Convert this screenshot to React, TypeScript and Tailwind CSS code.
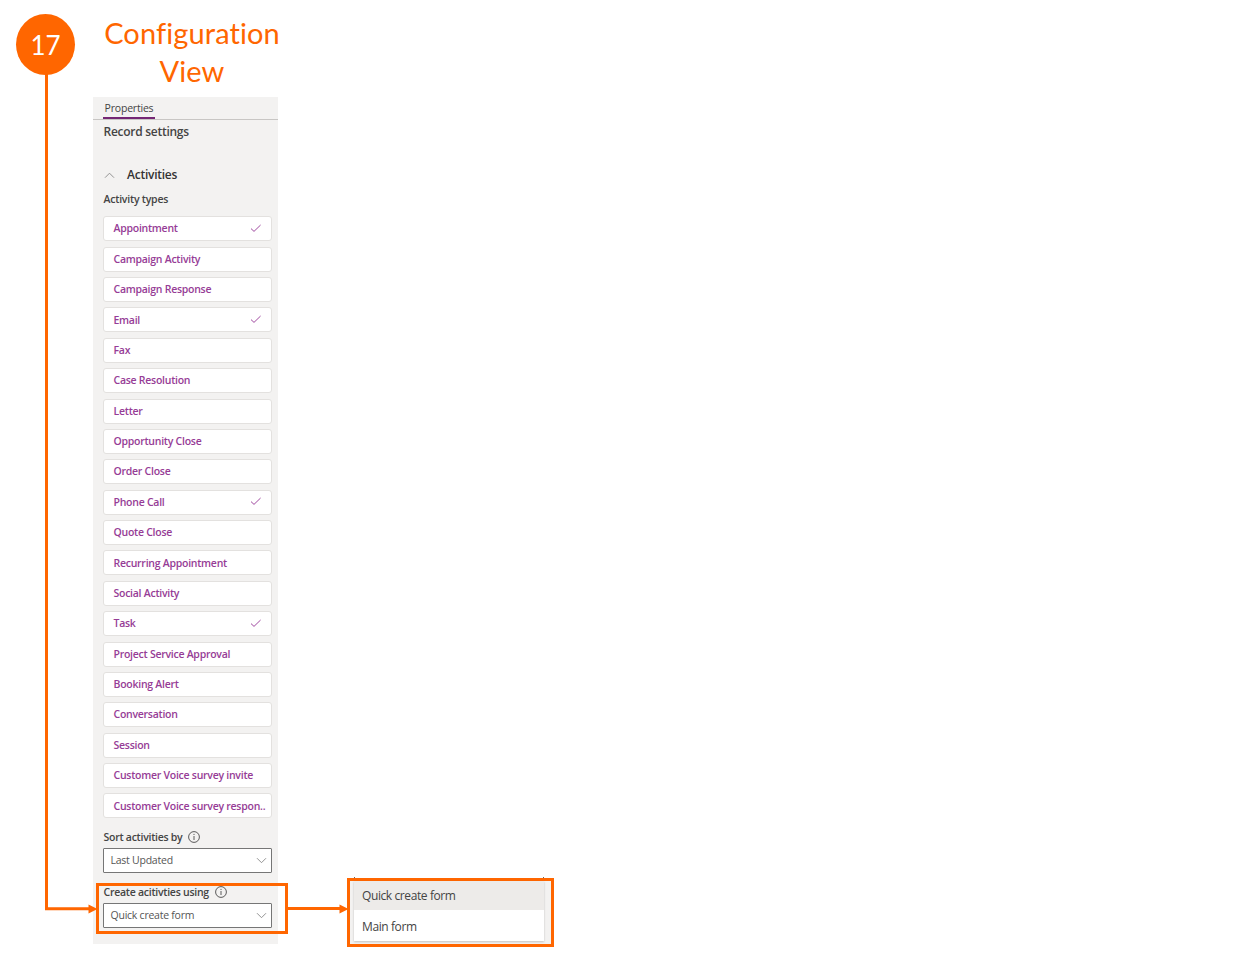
import type { ReactNode } from "react";

type Activity = { name: string; checked?: boolean };

const activities: Activity[] = [
  { name: "Appointment", checked: true },
  { name: "Campaign Activity" },
  { name: "Campaign Response" },
  { name: "Email", checked: true },
  { name: "Fax" },
  { name: "Case Resolution" },
  { name: "Letter" },
  { name: "Opportunity Close" },
  { name: "Order Close" },
  { name: "Phone Call", checked: true },
  { name: "Quote Close" },
  { name: "Recurring Appointment" },
  { name: "Social Activity" },
  { name: "Task", checked: true },
  { name: "Project Service Approval" },
  { name: "Booking Alert" },
  { name: "Conversation" },
  { name: "Session" },
  { name: "Customer Voice survey invite" },
  { name: "Customer Voice survey respon.." },
];

function Check() {
  return (
    <svg className="-mt-0.5" width="12" height="10" viewBox="0 0 12 10" fill="none" stroke="#a04aa0" strokeWidth="1">
      <path d="M1 5.6 4 8.4 10.6 2" />
    </svg>
  );
}

function Info() {
  return (
    <svg width="12" height="12" viewBox="0 0 12 12" fill="none" stroke="#4a4a4a" strokeWidth="0.9">
      <circle cx="6" cy="6" r="5.4" />
      <path d="M6 5v4M6 2.9v1.1" />
    </svg>
  );
}

function Chevron({ up = false }: { up?: boolean }) {
  return (
    <svg width="11" height="7" viewBox="0 0 11 7" fill="none" stroke="#888" strokeWidth="0.9">
      <path d={up ? "M1 5.7 5.5 1.2 10 5.7" : "M1 1.2 5.5 5.7 10 1.2"} />
    </svg>
  );
}

function Label({ children }: { children: ReactNode }) {
  return (
    <div className="flex h-[14px] items-center gap-1.5 whitespace-nowrap pl-[0.5px] text-[10.5px] leading-[14px] font-semibold tracking-[-0.26px] text-[#444]">
      <span className="pt-px">{children}</span>
      <Info />
    </div>
  );
}

function Select({ value }: { value: string }) {
  return (
    <div className="flex h-[25px] w-[169px] items-center justify-between rounded-[1px] border border-[#767676] bg-white pr-1 pl-[6.500px] text-[10.5px] tracking-[-0.24px] text-[#555]">
      <span className="whitespace-nowrap pt-px">{value}</span>
      <Chevron />
    </div>
  );
}

export default function App() {
  return (
    <main className="relative h-[954px] w-[1245px] overflow-hidden bg-white font-['Open_Sans','Noto_Sans',sans-serif]">
      <header className="flex h-[97px] items-start">
        <div className="mt-[14px] ml-4 flex h-[61px] w-[59px] items-center justify-center rounded-[50%] bg-[#ff6600] pt-0.5 font-['Lato',sans-serif] text-[26px] text-white">
          17
        </div>
        <h1 className="mt-[14px] ml-[17px] w-[200px] text-center font-['Lato',sans-serif] text-[29px] leading-[38px] tracking-[0.1px] text-[#ff6600]">
          Configuration
          <br />
          View
        </h1>
      </header>

      <section className="ml-[93px] flex h-[847px] w-[185px] flex-col bg-[#f3f2f1]">
        <div className="flex h-[23px] shrink-0 border-b border-[#c8c6c4] pl-[10px]">
          <span className="flex h-[22px] w-[52px] items-center justify-center border-b-2 border-[#742774] pt-[3px] text-[10.5px] font-medium tracking-[-0.2px] text-[#444]">
            Properties
          </span>
        </div>
        <div className="flex flex-col pl-[10px]">
          <h2 className="mt-1 h-4 pl-[0.5px] text-[12px] leading-4 font-semibold tracking-[-0.27px] text-[#444]">Record settings</h2>
          <div className="mt-[27px] flex h-4 items-center gap-3 pl-px text-[12px] leading-4 font-semibold tracking-[-0.25px] text-[#333]">
            <Chevron up />
            Activities
          </div>
          <div className="mt-[9px] h-[14px] pl-[0.5px] text-[10.5px] leading-[14px] font-semibold tracking-[-0.22px] text-[#444]">
            Activity types
          </div>
          <ul className="mt-[10.300px] flex flex-col gap-[5.38px]">
            {activities.map((a) => (
              <li
                key={a.name}
                className="flex h-[25px] w-[169px] items-center justify-between rounded-[3px] border border-[#e3e1df] bg-white pr-[9px] pl-[9.500px] text-[10.5px] font-semibold tracking-[-0.26px] text-[#963c96]"
              >
                <span className="whitespace-nowrap pt-px">{a.name}</span>
                {a.checked && <Check />}
              </li>
            ))}
          </ul>
          <div className="mt-[11.500px] flex flex-col gap-1">
            <Label>Sort activities by</Label>
            <Select value="Last Updated" />
          </div>
          <div className="mt-3 flex flex-col gap-1">
            <Label>Create acitivties using</Label>
            <Select value="Quick create form" />
          </div>
        </div>
      </section>

      <svg className="pointer-events-none absolute inset-0" width="1245" height="954" fill="none" stroke="#ff6600" strokeWidth="3">
        <path d="M46.5 74V908.8H90M287 908.5H342" />
        <path d="M88.500 904.500 97.500 909 88.500 913.500ZM339.500 904.500 348.500 909 339.500 913.500Z" fill="#ff6600" stroke="none" />
        <path d="M354.500 877V878M543.500 877V878" stroke="#666" strokeWidth="1" />
      </svg>
      <div className="absolute top-[883px] left-[96px] h-[51px] w-[192px] border-3 border-[#ff6600]" />
      <div className="absolute top-[878px] left-[347px] h-[69px] w-[207px] border-3 border-[#ff6600] bg-[#f3f2f1] pr-[7px] pl-1">
        <ul className="flex h-[60px] flex-col bg-white text-[12px] tracking-[-0.4px] text-[#444] shadow-[0_1px_2px_rgba(0,0,0,0.2)]">
          <li className="flex h-[29px] items-center bg-[#edebe9] pl-2">Quick create form</li>
          <li className="flex h-[31px] items-center pt-0.5 pl-2">Main form</li>
        </ul>
      </div>
    </main>
  );
}
